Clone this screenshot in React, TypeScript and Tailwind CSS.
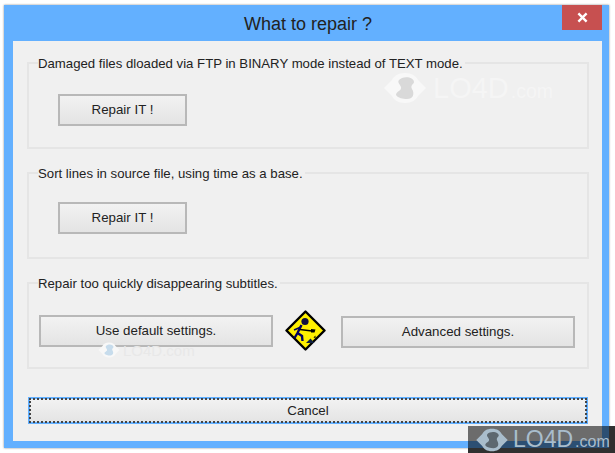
import React from "react";

const sans = "font-['Liberation_Sans',Arial,sans-serif]";

function GroupBox({ label, children }: { label: string; children: React.ReactNode }) {
  return (
    <fieldset className="h-[94px] border-2 border-[#e5e5e5] px-[9px] pb-0 pt-0">
      <legend className="bg-[#f0f0f0] pl-0 pr-[2px] text-[13.2px] leading-[16px] text-[#222]">
        <span className="relative top-px">{label}</span>
      </legend>
      {children}
    </fieldset>
  );
}

function WinButton({ children, className }: { children: React.ReactNode; className: string }) {
  return (
    <button
      className={`flex h-8 items-center justify-center border-2 border-[#b8b8b8] bg-gradient-to-b from-[#f2f2f2] to-[#e4e4e4] text-[13.3px] text-[#222] ${className}`}
    >
      {children}
    </button>
  );
}

function Recycle({ className, hub }: { className: string; hub: string }) {
  return (
    <svg viewBox="0 0 44 32" className={className}>
      <path d="M22 1 C15 1 11 4 9 8 L1 16 L9 24 C11 28 15 31 22 31 C29 31 33 28 35 24 L43 16 L35 8 C33 4 29 1 22 1 Z" fill="currentColor" />
      <path d="M19 6 C24 4 31 6 31 10 C31 12 27 13 29 17 C32 22 30 27 24 27 C20 27 15 26 13 23 C13 19 19 19 18 15 C17 12 12 9 19 6 Z" fill={hub} />
    </svg>
  );
}

function DiggerSign() {
  return (
    <svg viewBox="0 0 41 41" className="h-[41px] w-[41px]">
      <path d="M20.5 1.5 L39.5 20.5 L20.5 39.5 L1.5 20.5 Z" fill="#fff000" stroke="#000" strokeWidth="2.4" strokeLinejoin="round" />
      <circle cx="20" cy="11.5" r="3.6" fill="#101040" />
      <path d="M16.5 15 L12.5 23 L9.5 28 M12.5 23 L17 26 L17.5 31" stroke="#000060" strokeWidth="2.4" fill="none" />
      <path d="M16 17 L9 20" stroke="#000060" strokeWidth="1.6" fill="none" />
      <path d="M15 19.5 L27 21" stroke="#000" strokeWidth="1.3" />
      <path d="M26 19 L30.5 19.5 L29.5 22.5 L26 22.5 Z" fill="#000" />
      <path d="M21 33 L25.5 28.5 L29.5 33 Z" fill="#102040" />
      <path d="M28.5 27.5 L30.5 25.5 L30.5 28 Z" fill="#000" />
    </svg>
  );
}

export default function App() {
  return (
    <div className={`h-[453px] w-[615px] overflow-hidden bg-white pl-1 pt-[5px] ${sans}`}>
      <div className="relative h-[443px] w-[605px] bg-[#63b0ff] shadow-[0_0_2px_rgba(0,0,0,0.45)]">
        <div className="flex h-9 items-center justify-center pl-[3px] pt-[2px] text-[18px] text-[#222]">What to repair ?</div>
        <button className="absolute right-[7px] top-0 flex h-[25px] w-10 items-center justify-center bg-[#c75050]">
          <svg viewBox="0 0 12 12" className="h-[11px] w-[11px]">
            <path d="M1.5 1.5 L10.5 10.5 M10.5 1.5 L1.5 10.5" stroke="#fff" strokeWidth="2.6" />
          </svg>
        </button>

        <div className="mx-[9px] mb-[7px] flex h-[400px] w-[589px] flex-col gap-4 bg-[#f0f0f0] pl-[14px] pr-[13px] pt-[14px]">
          <GroupBox label="Damaged files dloaded via FTP in BINARY mode instead of TEXT mode.">
            <WinButton className="ml-[20px] mt-[23px] w-[129px]">Repair IT !</WinButton>
          </GroupBox>
          <GroupBox label="Sort lines in source file, using time as a base.">
            <WinButton className="ml-[20px] mt-[21px] w-[129px]">Repair IT !</WinButton>
          </GroupBox>
          <GroupBox label="Repair too quickly disappearing subtitles.">
            <div className="mt-[19px] flex items-start">
              <WinButton className="ml-px mt-[5px] w-[234px]">Use default settings.</WinButton>
              <div className="ml-[12px] mr-[15px]">
                <DiggerSign />
              </div>
              <WinButton className="mt-[6px] w-[234px]">Advanced settings.</WinButton>
            </div>
          </GroupBox>
          <button className="ml-px mt-3 flex h-[27px] w-[560px] items-center justify-center border-2 border-[#63b0ff] bg-gradient-to-b from-[#f2f2f2] to-[#e4e4e4] text-[13.3px] text-[#222] outline-2 -outline-offset-3 outline-[#444] outline-dotted">
            Cancel
          </button>
        </div>
      </div>

      {/* watermarks */}
      <div className="absolute left-[383px] top-[72px] flex items-center text-[#f8f8f8]">
        <Recycle className="h-[32px] w-[44px]" hub="#d9d9d9" />
        <span className="ml-[6px] flex items-baseline text-[29px] leading-none text-[#f5f5f5]">
          LO4D<span className="ml-[2px] text-[19.5px]">.com</span>
        </span>
      </div>
      <div className="absolute left-[98px] top-[342px] flex items-center text-[#f8f8f8]">
        <Recycle className="h-[16px] w-[22px]" hub="#c7dcec" />
        <span className="ml-[3px] text-[15px] leading-none text-[#e8e8e8]">LO4D.com</span>
      </div>
      <div className="absolute left-[468px] top-[426px] flex h-[27px] w-[147px] items-center bg-black/55 pl-[7px] text-[#a9bdcc]">
        <div className="absolute bottom-0 left-0 h-[5px] w-full bg-[#303030]" />
        <div className="absolute right-0 top-0 h-full w-[6px] bg-[#303030]" />
        <Recycle className="relative h-[24px] w-[34px]" hub="#5d6870" />
        <span className="relative ml-1 flex items-baseline text-[23px] leading-none">
          LO4D<span className="ml-[2px] text-[16px]">.com</span>
        </span>
      </div>
    </div>
  );
}
